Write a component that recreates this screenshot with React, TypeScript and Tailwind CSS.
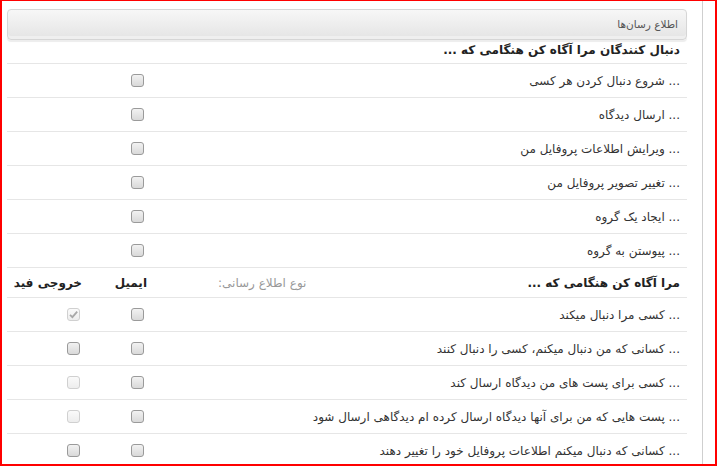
import React from "react";

type Box = "on" | "off" | "dis" | "disOn" | "none";

type Row = {
    text: string;
    email: Box;
    feed: Box;
};

const followers: Row[] = [
    { text: "... شروع دنبال کردن هر کسی", email: "on", feed: "none" },
    { text: "... ارسال دیدگاه", email: "on", feed: "none" },
    { text: "... ویرایش اطلاعات پروفایل من", email: "on", feed: "none" },
    { text: "... تغییر تصویر پروفایل من", email: "on", feed: "none" },
    { text: "... ایجاد یک گروه", email: "on", feed: "none" },
    { text: "... پیوستن به گروه", email: "on", feed: "none" },
];

const mine: Row[] = [
    { text: "... کسی مرا دنبال میکند", email: "on", feed: "disOn" },
    { text: "... کسانی که من دنبال میکنم، کسی را دنبال کنند", email: "on", feed: "on" },
    { text: "... کسی برای پست های من دیدگاه ارسال کند", email: "on", feed: "dis" },
    { text: "... پست هایی که من برای آنها دیدگاه ارسال کرده ام دیدگاهی ارسال شود", email: "on", feed: "dis" },
    { text: "... کسانی که دنبال میکنم اطلاعات پروفایل خود را تغییر دهند", email: "on", feed: "on" },
];

function Check({ kind }: { kind: Box }) {
    if (kind === "none") return null;
    const disabled = kind === "dis" || kind === "disOn";
    return (
        <span
            className={`relative inline-block w-[13px] h-[13px] rounded-[3px] border ${
                disabled
                    ? "border-[#d0d0d0] bg-gradient-to-b from-[#fafafa] to-[#ededed]"
                    : "border-[#9a9a9a] bg-gradient-to-b from-[#f2f2f2] to-[#d9d9d9]"
            }`}
        >
            {kind === "disOn" && (
                <svg viewBox="0 0 13 13" className="absolute -left-px -top-px w-[13px] h-[13px]">
                    <path d="M3 6.8 L5.4 9.2 L10.2 3.6" fill="none" stroke="#a8a8a8" strokeWidth="1.8" />
                </svg>
            )}
        </span>
    );
}

function CheckRow({ row }: { row: Row }) {
    return (
        <div className="flex items-center h-[34px] border-b border-[#e6e6e6]">
            <div className="flex-1 pr-[7px] text-[12px] text-[#333]">{row.text}</div>
            <div className="w-[70px] h-full flex items-center justify-start pr-[10px]">
                <Check kind={row.email} />
            </div>
            <div className="w-[77px] h-full flex items-center justify-start pr-[4px]">
                <Check kind={row.feed} />
            </div>
        </div>
    );
}

export default function App() {
    return (
        <div
            dir="rtl"
            className="w-[717px] h-[466px] overflow-hidden bg-white border-t border-l-2 border-r-2 border-b-2 border-[#ff0000] flex"
            style={{ fontFamily: '"DejaVu Sans", Tahoma, sans-serif' }}
        >
            <div className="w-[13px] shrink-0 border-l border-[#cfcfcf]" />
            <div className="flex-1 pl-[5px] pr-[15px] pt-[8px]">
                {/* --- panel header --- */}
                <div className="h-[31px] rounded-[4px] border border-[#d6d6d6] bg-gradient-to-b from-[#f7f7f7] to-[#e4e4e4] shadow-[inset_0_-3px_0_#efefef,0_2px_1px_#ededed] flex items-center pr-[8px]">
                    <span className="text-[10.5px] text-[#555]">اطلاع رسان‌ها</span>
                </div>

                {/* --- followers --- */}
                <div className="h-[23px] mt-[1px] flex items-end pb-[4px] pr-[7px] border-b border-[#e6e6e6]">
                    <h3 className="text-[12px] font-bold text-[#222]">دنبال کنندگان مرا آگاه کن هنگامی که ...</h3>
                </div>
                {followers.map((r) => (
                    <CheckRow key={r.text} row={r} />
                ))}

                {/* --- me --- */}
                <div className="flex items-center h-[30px] border-b border-[#e6e6e6]">
                    <div className="flex-1 flex items-center justify-between pr-[7px] pl-[64px]">
                        <h3 className="text-[12px] font-bold text-[#222]">مرا آگاه کن هنگامی که ...</h3>
                        <span className="text-[12px] text-[#999]">نوع اطلاع رسانی:</span>
                    </div>
                    <div className="w-[70px] pr-[7px] text-[12px] font-bold text-[#222]">ایمیل</div>
                    <div className="w-[77px] pr-[2px] text-[12px] font-bold text-[#222]">خروجی فید</div>
                </div>
                {mine.map((r) => (
                    <CheckRow key={r.text} row={r} />
                ))}
            </div>
        </div>
    );
}
